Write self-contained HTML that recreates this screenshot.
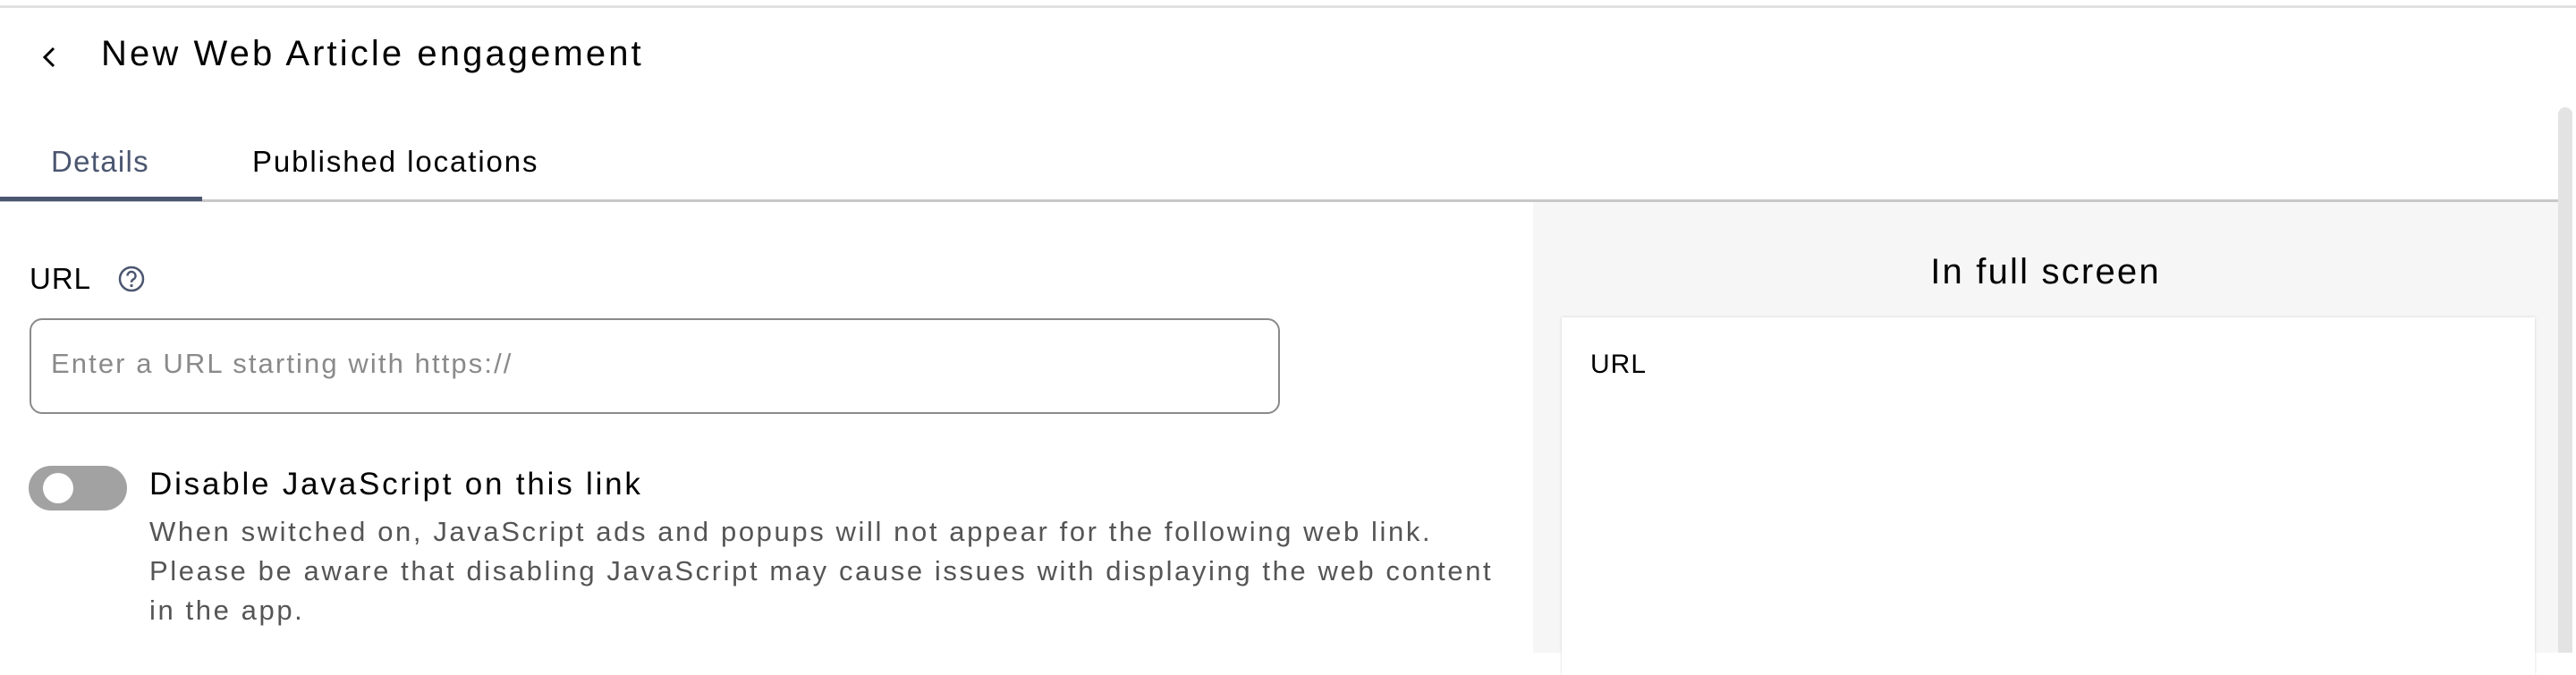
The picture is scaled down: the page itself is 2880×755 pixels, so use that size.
<!DOCTYPE html>
<html><head><meta charset="utf-8"><style>
*{margin:0;padding:0;box-sizing:border-box}
html,body{width:2880px;height:730px;overflow:hidden;background:#fff;font-family:"Liberation Sans",sans-serif;color:#000}
.a{position:absolute;white-space:nowrap}
</style></head><body>
<div class="a" style="left:0;top:6px;width:2880px;height:3px;background:#e0e0e0"></div>
<svg class="a" style="left:44px;top:50px" width="24" height="28" viewBox="0 0 24 28"><path d="M16 4 L6 14 L16 24" fill="none" stroke="#000" stroke-width="3"/></svg>
<div class="a" style="left:113px;top:36px;font-size:40px;line-height:48px;letter-spacing:3.1px">New Web Article engagement</div>
<div class="a" style="left:57px;top:161px;font-size:33px;line-height:40px;color:#4b5670;letter-spacing:1.3px">Details</div>
<div class="a" style="left:282px;top:161px;font-size:33px;line-height:40px;letter-spacing:1.9px">Published locations</div>
<div class="a" style="left:0;top:223px;width:2862px;height:3px;background:#c8c8c8"></div>
<div class="a" style="left:0;top:220px;width:226px;height:5px;background:#4b5670"></div>
<div class="a" style="left:1714px;top:226px;width:1146px;height:504px;background:#f6f6f6"></div>
<div class="a" style="left:2860px;top:120px;width:16px;height:610px;background:#e3e3e3;border-radius:8px 8px 0 0"></div>
<div class="a" style="left:1714px;top:280px;width:1146px;text-align:center;font-size:40px;line-height:48px;letter-spacing:2.2px">In full screen</div>
<div class="a" style="left:1746px;top:355px;width:1088px;height:400px;background:#fff;box-shadow:0 0 3px rgba(0,0,0,.15)"></div>
<div class="a" style="left:1778px;top:390px;font-size:30px;line-height:36px;letter-spacing:1px">URL</div>
<div class="a" style="left:33px;top:292px;font-size:33px;line-height:40px;letter-spacing:1px">URL</div>
<svg class="a" style="left:131px;top:296px" width="32" height="32" viewBox="0 0 32 32"><circle cx="16" cy="16" r="13" fill="none" stroke="#4b5670" stroke-width="2.5"/><path d="M11.5 12.5 a4.5 4.5 0 1 1 6.5 4 c-1.5 .8 -2 1.6 -2 3.2" fill="none" stroke="#4b5670" stroke-width="2.5"/><circle cx="16" cy="23.5" r="1.6" fill="#4b5670"/></svg>
<div class="a" style="left:33px;top:356px;width:1398px;height:107px;border:2px solid #8a8a8a;border-radius:14px"></div>
<div class="a" style="left:57px;top:388px;font-size:31px;line-height:38px;color:#8a8a8a;letter-spacing:2.1px">Enter a URL starting with https://</div>
<div class="a" style="left:32px;top:521px;width:110px;height:50px;background:#a2a2a2;border-radius:25px"></div>
<div class="a" style="left:48px;top:529px;width:34px;height:34px;background:#fff;border-radius:50%"></div>
<div class="a" style="left:167px;top:521px;font-size:35px;line-height:42px;letter-spacing:2.8px">Disable JavaScript on this link</div>
<div class="a" style="left:167px;top:573px;font-size:31px;line-height:44px;color:#555;letter-spacing:2.6px;white-space:normal;width:1600px">When switched on, JavaScript ads and popups will not appear for the following web link.<br>Please be aware that disabling JavaScript may cause issues with displaying the web content<br>in the app.</div>
</body></html>
